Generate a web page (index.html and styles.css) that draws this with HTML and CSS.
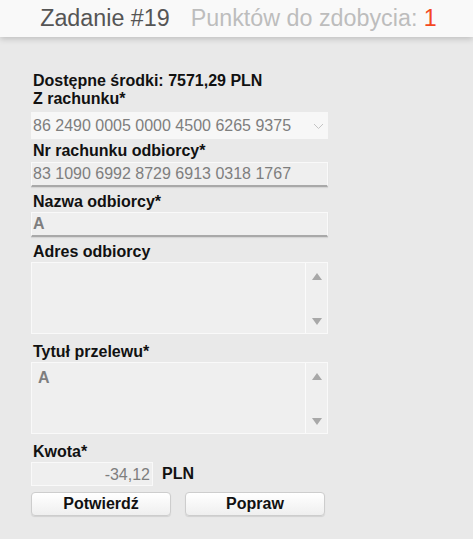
FILE: index.html
```html
<!DOCTYPE html>
<html lang="pl">
<head>
<meta charset="utf-8">
<title>Zadanie #19</title>
<link rel="stylesheet" href="styles.css">
</head>
<body>
<header class="top">
  <span class="task">Zadanie #19</span>
  <span class="points">Punktów do zdobycia: <span class="num">1</span></span>
</header>
<main class="form">
  <div class="label">Dostępne środki: 7571,29 PLN</div>
  <div class="label">Z rachunku*</div>
  <div class="select">
    <span>86 2490 0005 0000 4500 6265 9375</span>
    <svg class="chev" width="11" height="7" viewBox="0 0 11 7"><path d="M1 1 L5.5 5.5 L10 1" fill="none" stroke="#c4c4c4" stroke-width="1"/></svg>
  </div>
  <div class="label l3">Nr rachunku odbiorcy*</div>
  <div class="input dark">83 1090 6992 8729 6913 0318 1767</div>
  <div class="label l6">Nazwa odbiorcy*</div>
  <div class="input dark strong">A</div>
  <div class="label l6">Adres odbiorcy</div>
  <div class="area">
    <div class="area-text"></div>
    <div class="scroll">
      <svg width="10" height="7" viewBox="0 0 10 7"><path d="M5 0 L10 7 L0 7Z" fill="#a8a8a8"/></svg>
      <svg width="10" height="7" viewBox="0 0 10 7"><path d="M0 0 L10 0 L5 7Z" fill="#a8a8a8"/></svg>
    </div>
  </div>
  <div class="label l9">Tytuł przelewu*</div>
  <div class="area">
    <div class="area-text">A</div>
    <div class="scroll">
      <svg width="10" height="7" viewBox="0 0 10 7"><path d="M5 0 L10 7 L0 7Z" fill="#a8a8a8"/></svg>
      <svg width="10" height="7" viewBox="0 0 10 7"><path d="M0 0 L10 0 L5 7Z" fill="#a8a8a8"/></svg>
    </div>
  </div>
  <div class="label l9">Kwota*</div>
  <div class="amount-row">
    <div class="input amount">-34,12</div>
    <span class="cur">PLN</span>
  </div>
  <div class="buttons">
    <button class="btn">Potwierdź</button>
    <button class="btn">Popraw</button>
  </div>
</main>
</body>
</html>
```
FILE: styles.css
```css
html, body {
  margin: 0;
  padding: 0;
}
body {
  background: #e9e9e9;
  font-family: "Liberation Sans", Arial, sans-serif;
  width: 473px;
  height: 539px;
  overflow: hidden;
}
.top {
  height: 37px;
  background: #f9f9f9;
  box-shadow: 0 2px 6px rgba(0, 0, 0, 0.18);
  display: flex;
  justify-content: center;
  align-items: center;
  gap: 21px;
  font-size: 23.3px;
  padding-left: 4px;
  box-sizing: border-box;
  position: relative;
}
.task {
  color: #555;
}
.points {
  color: #bdbdbd;
}
.num {
  color: #f4481e;
}
.form {
  width: 297px;
  margin-left: 31px;
  padding-top: 35px;
  display: flex;
  flex-direction: column;
}
.label {
  font-weight: bold;
  font-size: 16px;
  line-height: 18px;
  height: 18px;
  color: #111;
  padding-left: 2px;
}
.label + .label {
  margin-bottom: 4px;
}
.l3 { margin-top: 3px; margin-bottom: 2px; }
.l6 { margin-top: 6px; margin-bottom: 1px; }
.l9 { margin-top: 9px; margin-bottom: 1px; }
.select {
  height: 27px;
  background: #f7f7f7;
  display: flex;
  align-items: center;
  justify-content: space-between;
  padding: 0 4px 0 2px;
  color: #7e7e7e;
  font-size: 16px;
}
.chev {
  margin-top: 2px;
}
.input {
  height: 25px;
  box-sizing: border-box;
  background: #efefef;
  border: 1px solid #f9f9f9;
  color: #7e7e7e;
  font-size: 16px;
  line-height: 22px;
  padding-left: 1px;
}
.input.dark {
  border-bottom: 2px solid #a9a9a9;
  box-shadow: 0 1px 1px rgba(0, 0, 0, 0.08);
}
.input.strong {
  font-weight: bold;
}
.area {
  height: 72px;
  box-sizing: border-box;
  background: #efefef;
  border: 1px solid #f9f9f9;
  display: flex;
}
.area-text {
  flex: 1;
  padding: 5px 6px;
  color: #7e7e7e;
  font-size: 16px;
  font-weight: bold;
  line-height: 19px;
  border-right: 1px solid #fbfbfb;
}
.scroll {
  width: 21px;
  display: flex;
  flex-direction: column;
  justify-content: space-between;
  align-items: center;
  padding: 10px 0 8px;
}
.amount-row {
  display: flex;
  align-items: center;
  gap: 9px;
}
.input.amount {
  width: 122px;
  height: 24px;
  text-align: right;
  padding-right: 2px;
  line-height: 23px;
}
.cur {
  font-weight: bold;
  font-size: 16px;
  color: #111;
}
.buttons {
  display: flex;
  gap: 14px;
  margin-top: 6px;
}
.btn {
  width: 140px;
  height: 24px;
  border: 1px solid #cdcdcd;
  border-radius: 4px;
  background: linear-gradient(#ffffff, #efefef);
  font-family: "Liberation Sans", Arial, sans-serif;
  font-weight: bold;
  font-size: 16px;
  color: #111;
  padding: 0;
  box-shadow: 0 1px 1px rgba(0, 0, 0, 0.1);
}
```
